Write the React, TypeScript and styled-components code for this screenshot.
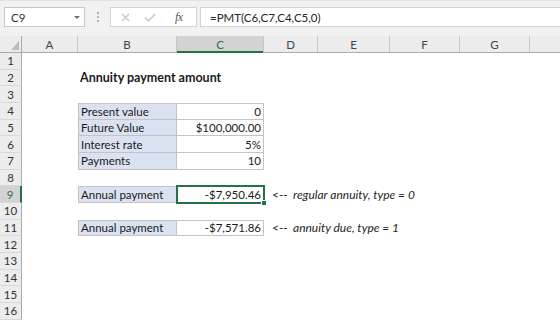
import React from "react";
import styled, { createGlobalStyle } from "styled-components";

const GlobalStyle = createGlobalStyle`
  html, body { margin: 0; padding: 0; background: #ffffff; overflow: hidden; }
  body { font-family: Lato, "Liberation Sans", Arial, sans-serif; font-size: 11px; color: #1a1a1a; }
  * { box-sizing: border-box; }
`;

const GREEN = "#217346";
const ROW_H = 50 / 3;

type Col = { key: string; w: number };
const COLS: Col[] = [
  { key: "A", w: 56 },
  { key: "B", w: 99 },
  { key: "C", w: 87 },
  { key: "D", w: 54 },
  { key: "E", w: 72 },
  { key: "F", w: 70 },
  { key: "G", w: 70 },
];

type CellData = {
  text?: string;
  align?: "left" | "right";
  fill?: boolean;
  box?: boolean;
  top?: boolean;
  left?: boolean;
  bold?: boolean;
  note?: boolean;
  active?: boolean;
};

const ROWS: Record<number, Record<string, CellData>> = {
  2: { B: { text: "Annuity payment amount", bold: true } },
  4: {
    B: { text: "Present value", fill: true, box: true, top: true, left: true },
    C: { text: "0", align: "right", box: true, top: true },
  },
  5: {
    B: { text: "Future Value", fill: true, box: true, left: true },
    C: { text: "$100,000.00", align: "right", box: true },
  },
  6: {
    B: { text: "Interest rate", fill: true, box: true, left: true },
    C: { text: "5%", align: "right", box: true },
  },
  7: {
    B: { text: "Payments", fill: true, box: true, left: true },
    C: { text: "10", align: "right", box: true },
  },
  9: {
    B: { text: "Annual payment", fill: true, box: true, top: true, left: true },
    C: { text: "-$7,950.46", align: "right", box: true, top: true, active: true },
    D: { text: "<--  regular annuity, type = 0", note: true },
  },
  11: {
    B: { text: "Annual payment", fill: true, box: true, top: true, left: true },
    C: { text: "-$7,571.86", align: "right", box: true, top: true },
    D: { text: "<--  annuity due, type = 1", note: true },
  },
};

/* ---------- toolbar ---------- */

const Toolbar = styled.div`
  height: 36px;
  background: #f1f1f1;
  border-top: 1px solid #e2e2e2;
  display: flex;
  align-items: flex-start;
  padding: 6px 0 0 4px;
`;

const NameBox = styled.div`
  width: 81px;
  height: 20px;
  background: #fff;
  border: 1px solid #c8c8c8;
  display: flex;
  align-items: center;
  justify-content: space-between;
  padding: 0 4px 0 6px;
  color: #333;
  font-size: 11.5px;
`;

const DropArrow = styled.span`
  width: 0;
  height: 0;
  border-left: 3px solid transparent;
  border-right: 3px solid transparent;
  border-top: 3px solid #6e6e6e;
`;

const Grip = styled.div`
  width: 25px;
  height: 20px;
  display: flex;
  flex-direction: column;
  align-items: center;
  justify-content: center;
  gap: 2px;
  & > span {
    width: 2px;
    height: 2px;
    background: #b4b4b4;
  }
`;

const FxGroup = styled.div`
  width: 87px;
  height: 20px;
  background: #fff;
  border: 1px solid #d3d3d3;
  display: flex;
  align-items: center;
  padding-left: 10px;
  gap: 14px;
`;

const FxLabel = styled.span`
  font-family: "Liberation Serif", "DejaVu Serif", serif;
  font-style: italic;
  font-size: 12px;
  color: #5a5a5a;
  letter-spacing: -0.5px;
  margin-left: 5px;
`;

const FormulaBar = styled.div`
  flex: 1;
  height: 20px;
  margin-left: 3px;
  background: #fff;
  border: 1px solid #d3d3d3;
  border-right: none;
  display: flex;
  align-items: center;
  padding-left: 9px;
  color: #262626;
  font-size: 11.5px;
`;

/* ---------- sheet ---------- */

const Sheet = styled.div`
  display: flex;
  flex-direction: column;
`;

const HeaderRow = styled.div`
  display: flex;
  height: 17px;
  background: #ececec;
  border-bottom: 1px solid #ababab;
`;

const Corner = styled.div`
  width: 22px;
  flex: none;
  position: relative;
  border-right: 1px solid #ababab;
`;

const SelectAll = styled.svg`
  position: absolute;
  right: 2px;
  bottom: 2px;
`;

const ColHead = styled.div<{ $w: number; $sel?: boolean }>`
  width: ${(p) => p.$w}px;
  flex: none;
  display: flex;
  align-items: center;
  justify-content: center;
  font-size: 11.5px;
  color: ${(p) => (p.$sel ? GREEN : "#444")};
  background: ${(p) => (p.$sel ? "#d3d3d3" : "transparent")};
  border-right: 1px solid #c8c8c8;
  box-shadow: ${(p) => (p.$sel ? `inset 0 -2px 0 ${GREEN}` : "none")};
  margin-bottom: ${(p) => (p.$sel ? "-1px" : "0")};
`;

const HeadFiller = styled.div`
  flex: 1;
`;

const Row = styled.div`
  display: flex;
  height: ${ROW_H}px;
`;

const RowHead = styled.div<{ $sel?: boolean }>`
  width: 22px;
  flex: none;
  display: flex;
  align-items: center;
  justify-content: center;
  font-size: 11.5px;
  color: ${(p) => (p.$sel ? GREEN : "#333")};
  background: ${(p) => (p.$sel ? "#d3d3d3" : "#ececec")};
  border-right: ${(p) => (p.$sel ? `2px solid ${GREEN}` : "1px solid #ababab")};
  border-bottom: 1px solid #d8d8d8;
`;

const Cell = styled.div<{
  $w: number;
  $align?: "left" | "right";
  $fill?: boolean;
  $box?: boolean;
  $top?: boolean;
  $left?: boolean;
  $bold?: boolean;
  $note?: boolean;
  $active?: boolean;
}>`
  width: ${(p) => p.$w}px;
  flex: none;
  position: relative;
  display: flex;
  align-items: center;
  justify-content: ${(p) => (p.$align === "right" ? "flex-end" : "flex-start")};
  padding: ${(p) => (p.$note ? "0 0 0 8px" : "0 2px")};
  white-space: pre;
  overflow: visible;
  font-size: ${(p) => (p.$bold ? "12.5px" : p.$note ? "12px" : "11.5px")};
  font-weight: ${(p) => (p.$bold ? 700 : 400)};
  font-style: ${(p) => (p.$note ? "italic" : "normal")};
  color: ${(p) => (p.$note ? "#262626" : "#1a1a1a")};
  background: ${(p) => (p.$fill ? "#dae2f2" : p.$box ? "#ffffff" : "transparent")};
  border-right: ${(p) => (p.$box ? "1px solid #c3c3c3" : "none")};
  border-bottom: ${(p) => (p.$box ? "1px solid #c3c3c3" : "none")};
  border-top: ${(p) => (p.$box && p.$top ? "1px solid #c3c3c3" : "none")};
  border-left: ${(p) => (p.$box && p.$left ? "1px solid #c3c3c3" : "none")};
  outline: ${(p) => (p.$active ? `2px solid ${GREEN}` : "none")};
  outline-offset: -1px;
  z-index: ${(p) => (p.$active ? 2 : "auto")};
`;

const FillHandle = styled.span`
  position: absolute;
  right: -4px;
  bottom: -4px;
  width: 6px;
  height: 6px;
  background: ${GREEN};
  border: 1px solid #ffffff;
`;

export default function App() {
  const rows = Array.from({ length: 16 }, (_, i) => i + 1);
  return (
    <>
      <GlobalStyle />
      <Toolbar>
        <NameBox>
          <span>C9</span>
          <DropArrow />
        </NameBox>
        <Grip>
          <span />
          <span />
          <span />
        </Grip>
        <FxGroup>
          <svg width="9" height="9" viewBox="0 0 9 9">
            <path d="M1 1 L8 8 M8 1 L1 8" stroke="#c4c4c4" strokeWidth="1.3" fill="none" />
          </svg>
          <svg width="12" height="9" viewBox="0 0 12 9">
            <path d="M1 4.5 L4.5 8 L11 1" stroke="#c4c4c4" strokeWidth="1.4" fill="none" />
          </svg>
          <FxLabel>fx</FxLabel>
        </FxGroup>
        <FormulaBar>=PMT(C6,C7,C4,C5,0)</FormulaBar>
      </Toolbar>
      <Sheet>
        <HeaderRow>
          <Corner>
            <SelectAll width="8" height="9" viewBox="0 0 8 9">
              <path d="M8 0 L8 9 L0 9 Z" fill="#bdbdbd" />
            </SelectAll>
          </Corner>
          {COLS.map((c) => (
            <ColHead key={c.key} $w={c.w} $sel={c.key === "C"}>
              {c.key}
            </ColHead>
          ))}
          <HeadFiller />
        </HeaderRow>
        {rows.map((r) => (
          <Row key={r}>
            <RowHead $sel={r === 9}>{r}</RowHead>
            {COLS.map((c) => {
              const d = ROWS[r]?.[c.key];
              return (
                <Cell
                  key={c.key}
                  $w={c.w}
                  $align={d?.align}
                  $fill={d?.fill}
                  $box={d?.box}
                  $top={d?.top}
                  $left={d?.left}
                  $bold={d?.bold}
                  $note={d?.note}
                  $active={d?.active}
                >
                  {d?.text}
                  {d?.active && <FillHandle />}
                </Cell>
              );
            })}
          </Row>
        ))}
      </Sheet>
    </>
  );
}
